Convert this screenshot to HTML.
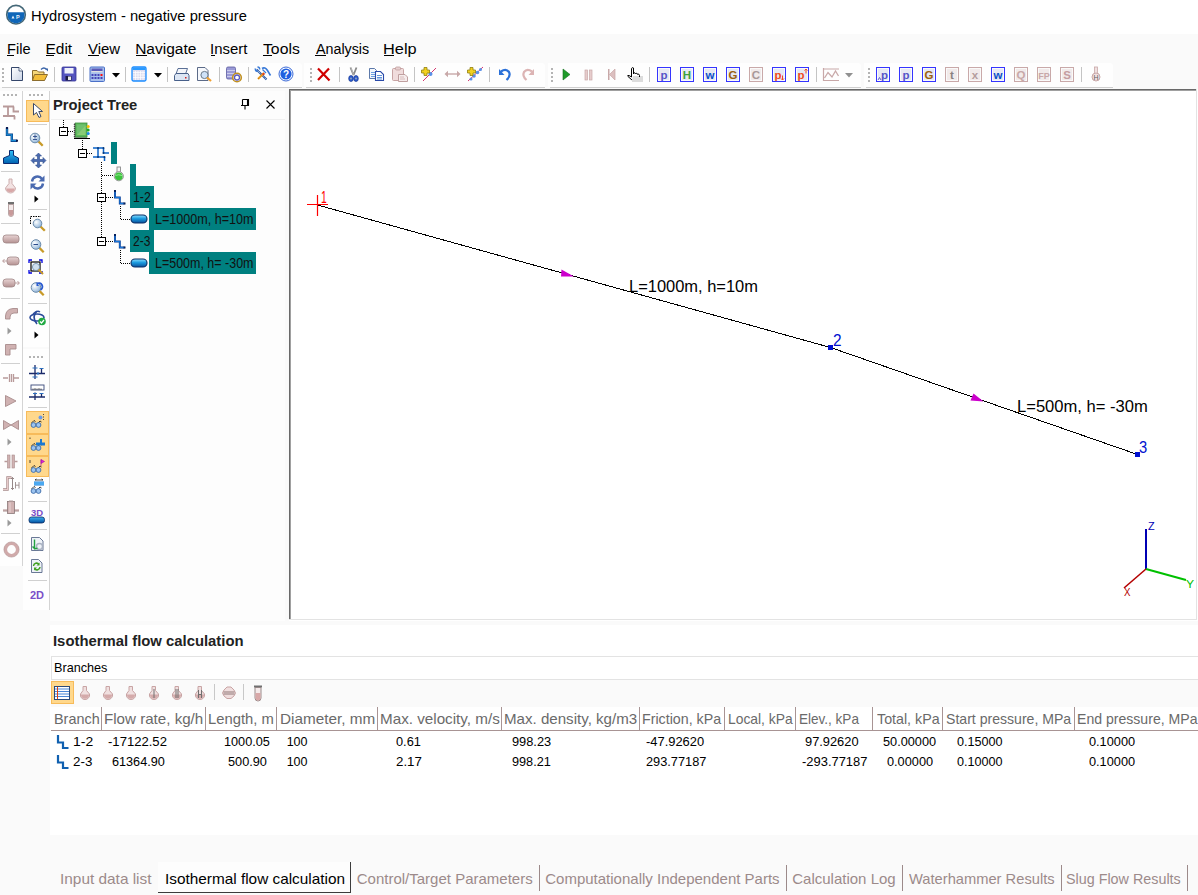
<!DOCTYPE html>
<html><head><meta charset="utf-8"><style>
html,body{margin:0;padding:0;}
body{width:1198px;height:895px;position:relative;overflow:hidden;background:#fafafa;font-family:"Liberation Sans",sans-serif;}
.t{position:absolute;white-space:nowrap;line-height:1;transform-origin:0 0;}
.r{position:absolute;}
svg.r{overflow:visible}
</style></head><body>
<div class="r" style="left:0px;top:0px;width:1198px;height:34px;background:#ffffff;"></div>
<svg class="r" style="left:5px;top:4px" width="22" height="22" viewBox="0 0 22 22">
<circle cx="11" cy="10.7" r="9.3" fill="#ffffff" stroke="#456878" stroke-width="1.6"/>
<path d="M2.85 8.3 H19.15 A8.5 8.5 0 1 1 2.85 8.3 Z" fill="#0f66b8"/>
<path d="M6.5 14.5L8 11.5L9.5 14.5Z" fill="#e8f0f8"/>
<text x="12.8" y="14.6" font-size="5.5" font-family="Liberation Sans" font-weight="bold" fill="#e8f0f8" text-anchor="middle">P</text>
</svg>
<div class="t" style="left:30.82px;top:8.00px;font-size:15.00px;color:#000;transform:scaleX(0.9809);">Hydrosystem - negative pressure</div>
<div class="t" style="left:6.53px;top:40.88px;font-size:15.50px;color:#000;transform:scaleX(0.9428);">File</div>
<div class="r" style="left:7px;top:55px;width:7px;height:1px;background:#000;"></div>
<div class="t" style="left:45.46px;top:40.88px;font-size:15.50px;color:#000;">Edit</div>
<div class="r" style="left:46px;top:55px;width:8px;height:1px;background:#000;"></div>
<div class="t" style="left:87.93px;top:40.88px;font-size:15.50px;color:#000;transform:scaleX(0.9625);">View</div>
<div class="r" style="left:88px;top:55px;width:11px;height:1px;background:#000;"></div>
<div class="t" style="left:135.16px;top:40.88px;font-size:15.50px;color:#000;">Navigate</div>
<div class="r" style="left:136px;top:55px;width:11px;height:1px;background:#000;"></div>
<div class="t" style="left:210.46px;top:40.88px;font-size:15.50px;color:#000;transform:scaleX(0.9630);">Insert</div>
<div class="r" style="left:211px;top:55px;width:4px;height:1px;background:#000;"></div>
<div class="t" style="left:263.49px;top:40.88px;font-size:15.50px;color:#000;transform:scaleX(1.0158);">Tools</div>
<div class="r" style="left:263px;top:55px;width:9px;height:1px;background:#000;"></div>
<div class="t" style="left:315.90px;top:40.88px;font-size:15.50px;color:#000;transform:scaleX(0.9214);">Analysis</div>
<div class="r" style="left:315px;top:55px;width:11px;height:1px;background:#000;"></div>
<div class="t" style="left:383.49px;top:40.88px;font-size:15.50px;color:#000;transform:scaleX(1.0536);">Help</div>
<div class="r" style="left:384px;top:55px;width:10px;height:1px;background:#000;"></div>
<div class="r" style="left:0px;top:63px;width:302px;height:24px;background:#fefefe;border-radius:0 3px 0 0"></div>
<div class="r" style="left:2px;top:87px;width:300px;height:1px;background:#cfcfcf;"></div>
<div class="r" style="left:304px;top:63px;width:241px;height:24px;background:#fefefe;border-radius:0 3px 0 0"></div>
<div class="r" style="left:306px;top:87px;width:239px;height:1px;background:#cfcfcf;"></div>
<div class="r" style="left:548px;top:63px;width:313px;height:24px;background:#fefefe;border-radius:0 3px 0 0"></div>
<div class="r" style="left:550px;top:87px;width:311px;height:1px;background:#cfcfcf;"></div>
<div class="r" style="left:864px;top:63px;width:249px;height:24px;background:#fefefe;border-radius:0 3px 0 0"></div>
<div class="r" style="left:866px;top:87px;width:247px;height:1px;background:#cfcfcf;"></div>
<div class="r" style="left:2px;top:68px;width:2px;height:2px;background:#b4b4b4"></div><div class="r" style="left:2px;top:72px;width:2px;height:2px;background:#b4b4b4"></div><div class="r" style="left:2px;top:76px;width:2px;height:2px;background:#b4b4b4"></div><div class="r" style="left:2px;top:80px;width:2px;height:2px;background:#b4b4b4"></div><svg class="r" style="left:10px;top:66px" width="14" height="16" viewBox="0 0 14 16"><defs><linearGradient id="nd" x1="0" y1="0" x2="1" y2="1"><stop offset="0" stop-color="#ffffff"/><stop offset="1" stop-color="#c9d3e6"/></linearGradient></defs><path d="M1.5 1.5H9L12.5 5V14.5H1.5Z" fill="url(#nd)" stroke="#34466a" stroke-width="1"/><path d="M9 1.5V5H12.5" fill="#fff" stroke="#34466a" stroke-width="0.8"/></svg><svg class="r" style="left:31px;top:66px" width="18" height="16" viewBox="0 0 18 16"><path d="M1.5 4.5H6L7.5 6H13V14.5H1.5Z" fill="#f5d77a" stroke="#8c6d2e" stroke-width="1"/><path d="M3.5 8.5H16.5L13.5 14.5H1.5Z" fill="#f2bd3a" stroke="#8c6d2e" stroke-width="1"/><path d="M10 3.5Q13 0.5 15.5 3.5" fill="none" stroke="#3a64a8" stroke-width="1.3"/><path d="M14 2.5H17V5.5Z" fill="#3a64a8"/></svg><div class="r" style="left:54px;top:67px;width:1px;height:15px;background:#c4c4c4"></div><svg class="r" style="left:61px;top:66px" width="16" height="16" viewBox="0 0 16 16"><rect x="1" y="1" width="14" height="14" rx="1" fill="#5454bf" stroke="#343494" stroke-width="0.8"/><rect x="3.5" y="2" width="9" height="5.5" fill="#eef0fa"/><rect x="4.5" y="10" width="6" height="4.5" fill="#1b1b40"/><rect x="7" y="10.5" width="3" height="3.5" fill="#e8e8e8"/></svg><div class="r" style="left:83px;top:67px;width:1px;height:15px;background:#c4c4c4"></div><svg class="r" style="left:89px;top:66px" width="17" height="17" viewBox="0 0 17 17"><rect x="1" y="1" width="14.5" height="14.5" rx="1" fill="#a8c0ec" stroke="#4a70c8" stroke-width="1"/><rect x="2.5" y="2.5" width="11" height="2.5" fill="#5a5ab8"/><rect x="2.5" y="5" width="11" height="1.2" fill="#e0e0e0"/><g fill="#4444b8"><rect x="2.5" y="8" width="2" height="2"/><rect x="5.5" y="8" width="2" height="2"/><rect x="8.5" y="8" width="2" height="2"/><rect x="2.5" y="11" width="2" height="2"/><rect x="5.5" y="11" width="2" height="2"/><rect x="8.5" y="11" width="2" height="2"/><rect x="11.5" y="11" width="2" height="2"/></g><rect x="11.5" y="8" width="2" height="2" fill="#ff1010"/></svg><svg class="r" style="left:112px;top:73px" width="8" height="5" viewBox="0 0 8 5"><path d="M0 0H8L4 4.5Z" fill="#000"/></svg><div class="r" style="left:125px;top:67px;width:1px;height:15px;background:#c4c4c4"></div><svg class="r" style="left:131px;top:66px" width="16" height="16" viewBox="0 0 16 16"><rect x="1" y="1" width="14" height="14" rx="1.5" fill="#dcdcf0" stroke="#1a8cff" stroke-width="1.3"/><rect x="1.5" y="1.5" width="13" height="2.5" fill="#2a9aff"/><path d="M2 6.5H14M2 9H14M2 11.5H14M4.5 5V14M7 5V14M9.5 5V14M12 5V14" stroke="#ffffff" stroke-width="0.7"/></svg><svg class="r" style="left:154px;top:73px" width="8" height="5" viewBox="0 0 8 5"><path d="M0 0H8L4 4.5Z" fill="#000"/></svg><div class="r" style="left:167px;top:67px;width:1px;height:15px;background:#c4c4c4"></div><svg class="r" style="left:173px;top:66px" width="17" height="16" viewBox="0 0 17 16"><path d="M5 2.5H14.5L12.5 8H3Z" fill="#f4f6fa" stroke="#48608a" stroke-width="0.9"/><path d="M1.5 9.5L3 7.5H15L16 9.5V14.5H1.5Z" fill="#dce6f4" stroke="#48608a" stroke-width="1"/><rect x="12" y="11" width="1.5" height="1.5" fill="#d02020"/></svg><svg class="r" style="left:196px;top:66px" width="17" height="16" viewBox="0 0 17 16"><path d="M1.5 1.5H9L12 4.5V14.5H1.5Z" fill="#f6f8fc" stroke="#4a5a7a" stroke-width="0.9"/><circle cx="8.5" cy="9" r="3.6" fill="#cfe2f8" stroke="#6a7a8a" stroke-width="1"/><path d="M11 11.5L15 15" stroke="#f0a030" stroke-width="2.2"/></svg><div class="r" style="left:219px;top:67px;width:1px;height:15px;background:#c4c4c4"></div><svg class="r" style="left:225px;top:66px" width="18" height="17" viewBox="0 0 18 17"><rect x="1.5" y="1" width="9" height="12" rx="1.5" fill="#9a9ad6" stroke="#5a5aa0" stroke-width="0.8"/><path d="M2 4.5H10M2 7.5H10M2 10.5H10" stroke="#d8d8f0" stroke-width="0.8"/><circle cx="12" cy="11.5" r="4.3" fill="#ffffff" stroke="#c09020" stroke-width="1.6"/><circle cx="12" cy="11.5" r="2.5" fill="#fff" stroke="#5a5ac0" stroke-width="1.3"/></svg><div class="r" style="left:248px;top:67px;width:1px;height:15px;background:#c4c4c4"></div><svg class="r" style="left:254px;top:66px" width="18" height="16" viewBox="0 0 18 16"><path d="M2.5 3.5L12.5 13.5" stroke="#2a5aa8" stroke-width="2"/><path d="M2.5 3.5L12.5 13.5" stroke="#ffffff" stroke-width="0.8" stroke-dasharray="1,1"/><path d="M4 13L10 7" stroke="#f0a020" stroke-width="2.2"/><path d="M4 13L10 7" stroke="#805010" stroke-width="0.6" stroke-dasharray="1,1.5"/><path d="M1.5 2.5Q1 5 3.5 5.5M3.5 1Q6 1 5.5 3.5" fill="none" stroke="#3a7ad8" stroke-width="1.6"/><path d="M8 2.5Q11 0.5 13.5 4.5L16.5 9.5" fill="none" stroke="#3a7ad8" stroke-width="1.6"/><path d="M8.5 3.5L12 7" stroke="#3a7ad8" stroke-width="1.2"/><circle cx="9.5" cy="8" r="1.2" fill="#e04020"/></svg><svg class="r" style="left:278px;top:66px" width="16" height="16" viewBox="0 0 16 16"><circle cx="8" cy="8" r="7" fill="#ffffff" stroke="#3a6ad8" stroke-width="1"/><circle cx="8" cy="8" r="5.6" fill="#1f5fe0"/><text x="8" y="11.6" font-family="Liberation Sans" font-weight="bold" font-size="10" fill="#fff" text-anchor="middle">?</text></svg><div class="r" style="left:310px;top:68px;width:2px;height:2px;background:#b4b4b4"></div><div class="r" style="left:310px;top:72px;width:2px;height:2px;background:#b4b4b4"></div><div class="r" style="left:310px;top:76px;width:2px;height:2px;background:#b4b4b4"></div><div class="r" style="left:310px;top:80px;width:2px;height:2px;background:#b4b4b4"></div><svg class="r" style="left:316px;top:67px" width="15" height="15" viewBox="0 0 15 15"><path d="M2 1.5L13.5 13.5M13 1.5L2 13" stroke="#d00000" stroke-width="2.2"/></svg><div class="r" style="left:339px;top:67px;width:1px;height:15px;background:#c4c4c4"></div><svg class="r" style="left:348px;top:66px" width="11" height="16" viewBox="0 0 11 16"><path d="M2.5 1.5L5.5 9M8.5 1.5L5.5 9" stroke="#8a8a8a" stroke-width="1.8"/><path d="M3 2L5.5 8.5" stroke="#d0d0d0" stroke-width="0.6"/><ellipse cx="3" cy="12.5" rx="2.3" ry="3" fill="#2a5ad0" stroke="#1a3a90" stroke-width="0.7"/><ellipse cx="8" cy="12.5" rx="2.3" ry="3" fill="#2a5ad0" stroke="#1a3a90" stroke-width="0.7"/><circle cx="3" cy="12.5" r="0.9" fill="#9ab"/><circle cx="8" cy="12.5" r="0.9" fill="#9ab"/></svg><svg class="r" style="left:368px;top:66px" width="17" height="16" viewBox="0 0 17 16"><path d="M1.5 2.5H6.5L8.5 4.5V12.5H1.5Z" fill="#f4f7fc" stroke="#4a6aa0" stroke-width="0.9"/><path d="M3 6.5H7M3 8.5H7M3 10.5H7" stroke="#4a88d8" stroke-width="0.8"/><path d="M7.5 5.5H12.5L15.5 8.5V14.5H7.5Z" fill="#ffffff" stroke="#2a4aa8" stroke-width="1.1"/><path d="M9 9.5H14M9 11.5H14M9 13H14" stroke="#3a78d0" stroke-width="0.8"/></svg><svg class="r" style="left:391px;top:66px" width="18" height="17" viewBox="0 0 18 17"><rect x="1.5" y="2.5" width="11" height="12" rx="1" fill="#f0dcdc" stroke="#c8a4a4" stroke-width="1"/><rect x="4.5" y="1" width="5" height="3" rx="1" fill="#e8d0d0" stroke="#c0a0a0" stroke-width="0.8"/><path d="M7.5 8.5H14L16.5 11V15.5H7.5Z" fill="#f6ecec" stroke="#c0a0a0" stroke-width="1"/><path d="M9 11H13M9 13H14" stroke="#d0b0b0" stroke-width="0.8"/></svg><div class="r" style="left:414px;top:67px;width:1px;height:15px;background:#c4c4c4"></div><svg class="r" style="left:420px;top:66px" width="18" height="16" viewBox="0 0 18 16"><path d="M3 15L16 2" stroke="#d02060" stroke-width="0.9"/><circle cx="10.5" cy="8" r="2" fill="#5a90e8"/><path d="M4 1.5H7V4H9.5V7H7V9.5H4V7H1.5V4H4Z" fill="#f2d020" stroke="#908010" stroke-width="0.8"/></svg><svg class="r" style="left:444px;top:69px" width="17" height="10" viewBox="0 0 17 10"><path d="M3 4.3H14V5.7H3Z" fill="#c8a8a8"/><path d="M0.5 5L4 1.8V8.2Z M16.5 5L13 1.8V8.2Z" fill="#c8a8a8"/></svg><svg class="r" style="left:466px;top:66px" width="18" height="16" viewBox="0 0 18 16"><path d="M2 15L17 1" stroke="#d02060" stroke-width="0.9"/><circle cx="8" cy="10" r="1.8" fill="#5a90e8"/><circle cx="11.5" cy="6.5" r="1.8" fill="#5a90e8"/><circle cx="5" cy="13" r="1.5" fill="#5a90e8"/><circle cx="14.5" cy="3.5" r="1.5" fill="#5a90e8"/><path d="M4 1.5H7V4H9.5V7H7V9.5H4V7H1.5V4H4Z" fill="#f2d020" stroke="#908010" stroke-width="0.8"/></svg><div class="r" style="left:489px;top:67px;width:1px;height:15px;background:#c4c4c4"></div><svg class="r" style="left:498px;top:67px" width="14" height="15" viewBox="0 0 14 15"><path d="M3 4.5Q8 1 11 5Q13 9 8.5 13" fill="none" stroke="#2a70d8" stroke-width="2.2"/><path d="M1 2V8H6.5Z" fill="#2a70d8"/></svg><svg class="r" style="left:521px;top:67px" width="14" height="15" viewBox="0 0 14 15"><path d="M11 4.5Q6 1 3 5Q1 9 5.5 13" fill="none" stroke="#dcb4b4" stroke-width="2.2"/><path d="M13 2V8H7.5Z" fill="#dcb4b4"/></svg><div class="r" style="left:551px;top:68px;width:2px;height:2px;background:#b4b4b4"></div><div class="r" style="left:551px;top:72px;width:2px;height:2px;background:#b4b4b4"></div><div class="r" style="left:551px;top:76px;width:2px;height:2px;background:#b4b4b4"></div><div class="r" style="left:551px;top:80px;width:2px;height:2px;background:#b4b4b4"></div><svg class="r" style="left:562px;top:68px" width="9" height="13" viewBox="0 0 9 13"><path d="M1 1V12L8 6.5Z" fill="#1f9a2a" stroke="#157020" stroke-width="0.6"/></svg><svg class="r" style="left:584px;top:68px" width="9" height="13" viewBox="0 0 9 13"><rect x="1" y="2" width="2.5" height="10" fill="#e6cccc" stroke="#c8a8a8" stroke-width="0.7"/><rect x="5.5" y="2" width="2.5" height="10" fill="#e6cccc" stroke="#c8a8a8" stroke-width="0.7"/></svg><svg class="r" style="left:607px;top:68px" width="9" height="13" viewBox="0 0 9 13"><rect x="1" y="1" width="1.5" height="11" fill="#c8a8a8"/><path d="M8 1V12L2.5 6.5Z" fill="#dcc0c0" stroke="#c8a8a8" stroke-width="0.7"/></svg><svg class="r" style="left:626px;top:66px" width="18" height="17" viewBox="0 0 18 17"><rect x="6" y="10" width="11" height="6" fill="#dcdcdc"/><path d="M6 14L2 10.5Q1 9 3 9.5L5.5 11V2.5Q6 1 7.5 2V8M7.5 7Q9 6 9.5 8M9.5 7.5Q11 6.5 11.5 8.5M11.5 8Q13 7.5 13.5 9.5V11" fill="#fff" stroke="#000" stroke-width="1"/></svg><div class="r" style="left:649px;top:67px;width:1px;height:15px;background:#c4c4c4"></div><svg class="r" style="left:657px;top:67px" width="14" height="15" viewBox="0 0 14 15"><rect x="0.5" y="0.5" width="13" height="14" fill="#e6e9f3" stroke="#3535ff" stroke-width="1"/><rect x="1.5" y="1.5" width="11" height="12" fill="none" stroke="#fafafa" stroke-width="1"/><text x="7.0" y="12" font-family="Liberation Sans" font-weight="bold" font-size="11.5" fill="#5555c8" text-anchor="middle">p</text></svg><svg class="r" style="left:680px;top:67px" width="14" height="15" viewBox="0 0 14 15"><rect x="0.5" y="0.5" width="13" height="14" fill="#e6e9f3" stroke="#3535ff" stroke-width="1"/><rect x="1.5" y="1.5" width="11" height="12" fill="none" stroke="#fafafa" stroke-width="1"/><text x="7.0" y="12" font-family="Liberation Sans" font-weight="bold" font-size="11.5" fill="#3f9f3f" text-anchor="middle">H</text></svg><svg class="r" style="left:703px;top:67px" width="14" height="15" viewBox="0 0 14 15"><rect x="0.5" y="0.5" width="13" height="14" fill="#e6e9f3" stroke="#3535ff" stroke-width="1"/><rect x="1.5" y="1.5" width="11" height="12" fill="none" stroke="#fafafa" stroke-width="1"/><text x="7.0" y="12" font-family="Liberation Sans" font-weight="bold" font-size="11.5" fill="#0a50c8" text-anchor="middle">w</text></svg><svg class="r" style="left:726px;top:67px" width="14" height="15" viewBox="0 0 14 15"><rect x="0.5" y="0.5" width="13" height="14" fill="#e6e9f3" stroke="#3535ff" stroke-width="1"/><rect x="1.5" y="1.5" width="11" height="12" fill="none" stroke="#fafafa" stroke-width="1"/><text x="7.0" y="12" font-family="Liberation Sans" font-weight="bold" font-size="11.5" fill="#9a6010" text-anchor="middle">G</text></svg><svg class="r" style="left:749px;top:67px" width="14" height="15" viewBox="0 0 14 15"><rect x="0.5" y="0.5" width="13" height="14" fill="#f1eaea" stroke="#c9a9a9" stroke-width="1"/><rect x="1.5" y="1.5" width="11" height="12" fill="none" stroke="#fafafa" stroke-width="1"/><text x="7.0" y="12" font-family="Liberation Sans" font-weight="bold" font-size="11.5" fill="#a89898" text-anchor="middle">C</text></svg><svg class="r" style="left:772px;top:67px" width="14" height="15" viewBox="0 0 14 15"><rect x="0.5" y="0.5" width="13" height="14" fill="#e6e9f3" stroke="#3535ff" stroke-width="1"/><rect x="1.5" y="1.5" width="11" height="12" fill="none" stroke="#fafafa" stroke-width="1"/><text x="6.0" y="12" font-family="Liberation Sans" font-weight="bold" font-size="11.5" fill="#f04a20" text-anchor="middle">p</text><path d="M10.5 8.5V13M9 11.5L10.5 13L12 11.5" fill="none" stroke="#f04a20" stroke-width="1"/></svg><svg class="r" style="left:795px;top:67px" width="14" height="15" viewBox="0 0 14 15"><rect x="0.5" y="0.5" width="13" height="14" fill="#e6e9f3" stroke="#3535ff" stroke-width="1"/><rect x="1.5" y="1.5" width="11" height="12" fill="none" stroke="#fafafa" stroke-width="1"/><text x="6.0" y="12" font-family="Liberation Sans" font-weight="bold" font-size="11.5" fill="#f04a20" text-anchor="middle">p</text><path d="M11 2V6.5M9.5 3.5L11 2L12.5 3.5" fill="none" stroke="#f04a20" stroke-width="1"/></svg><div class="r" style="left:816px;top:67px;width:1px;height:15px;background:#c4c4c4"></div><svg class="r" style="left:822px;top:67px" width="18" height="15" viewBox="0 0 18 15"><path d="M1.5 1V13.5H17M1 13.5H17" stroke="#c8a8a8" stroke-width="1.2" fill="none"/><path d="M1 2H17" stroke="#c8a8a8" stroke-width="1"/><path d="M2.5 11L6 5.5L10 10L13.5 4L16.5 9" fill="none" stroke="#c8a8a8" stroke-width="1.3"/></svg><svg class="r" style="left:845px;top:73px" width="8" height="5" viewBox="0 0 8 5"><path d="M0 0H8L4 4.5Z" fill="#909090"/></svg><div class="r" style="left:868px;top:68px;width:2px;height:2px;background:#b4b4b4"></div><div class="r" style="left:868px;top:72px;width:2px;height:2px;background:#b4b4b4"></div><div class="r" style="left:868px;top:76px;width:2px;height:2px;background:#b4b4b4"></div><div class="r" style="left:868px;top:80px;width:2px;height:2px;background:#b4b4b4"></div><svg class="r" style="left:876px;top:67px" width="14" height="15" viewBox="0 0 14 15"><rect x="0.5" y="0.5" width="13" height="14" fill="#e6e9f3" stroke="#3535ff" stroke-width="1"/><rect x="1.5" y="1.5" width="11" height="12" fill="none" stroke="#fafafa" stroke-width="1"/><text x="8.5" y="12" font-family="Liberation Sans" font-weight="bold" font-size="11.5" fill="#5555c8" text-anchor="middle">p</text><path d="M2 13L3.5 10.5L5 13" fill="none" stroke="#5555c8" stroke-width="0.9"/></svg><svg class="r" style="left:899px;top:67px" width="14" height="15" viewBox="0 0 14 15"><rect x="0.5" y="0.5" width="13" height="14" fill="#e6e9f3" stroke="#3535ff" stroke-width="1"/><rect x="1.5" y="1.5" width="11" height="12" fill="none" stroke="#fafafa" stroke-width="1"/><text x="7.0" y="12" font-family="Liberation Sans" font-weight="bold" font-size="11.5" fill="#5555c8" text-anchor="middle">p</text></svg><svg class="r" style="left:922px;top:67px" width="14" height="15" viewBox="0 0 14 15"><rect x="0.5" y="0.5" width="13" height="14" fill="#e6e9f3" stroke="#3535ff" stroke-width="1"/><rect x="1.5" y="1.5" width="11" height="12" fill="none" stroke="#fafafa" stroke-width="1"/><text x="7.0" y="12" font-family="Liberation Sans" font-weight="bold" font-size="11.5" fill="#9a6010" text-anchor="middle">G</text></svg><svg class="r" style="left:945px;top:67px" width="14" height="15" viewBox="0 0 14 15"><rect x="0.5" y="0.5" width="13" height="14" fill="#f1eaea" stroke="#c9a9a9" stroke-width="1"/><rect x="1.5" y="1.5" width="11" height="12" fill="none" stroke="#fafafa" stroke-width="1"/><text x="7.0" y="12" font-family="Liberation Sans" font-weight="bold" font-size="11.5" fill="#8a8080" text-anchor="middle">t</text></svg><svg class="r" style="left:968px;top:67px" width="14" height="15" viewBox="0 0 14 15"><rect x="0.5" y="0.5" width="13" height="14" fill="#f1eaea" stroke="#c9a9a9" stroke-width="1"/><rect x="1.5" y="1.5" width="11" height="12" fill="none" stroke="#fafafa" stroke-width="1"/><text x="7.0" y="12" font-family="Liberation Sans" font-weight="bold" font-size="11.5" fill="#b49c9c" text-anchor="middle">x</text></svg><svg class="r" style="left:991px;top:67px" width="14" height="15" viewBox="0 0 14 15"><rect x="0.5" y="0.5" width="13" height="14" fill="#e6e9f3" stroke="#3535ff" stroke-width="1"/><rect x="1.5" y="1.5" width="11" height="12" fill="none" stroke="#fafafa" stroke-width="1"/><text x="7.0" y="12" font-family="Liberation Sans" font-weight="bold" font-size="11.5" fill="#0a50c8" text-anchor="middle">w</text></svg><svg class="r" style="left:1014px;top:67px" width="14" height="15" viewBox="0 0 14 15"><rect x="0.5" y="0.5" width="13" height="14" fill="#f1eaea" stroke="#c9a9a9" stroke-width="1"/><rect x="1.5" y="1.5" width="11" height="12" fill="none" stroke="#fafafa" stroke-width="1"/><text x="7.0" y="12" font-family="Liberation Sans" font-weight="bold" font-size="11.5" fill="#c8a8a8" text-anchor="middle">Q</text></svg><svg class="r" style="left:1037px;top:67px" width="14" height="15" viewBox="0 0 14 15"><rect x="0.5" y="0.5" width="13" height="14" fill="#f1eaea" stroke="#c9a9a9" stroke-width="1"/><rect x="1.5" y="1.5" width="11" height="12" fill="none" stroke="#fafafa" stroke-width="1"/><text x="7.0" y="12" font-family="Liberation Sans" font-weight="bold" font-size="9" fill="#c8a8a8" text-anchor="middle">FP</text></svg><svg class="r" style="left:1060px;top:67px" width="14" height="15" viewBox="0 0 14 15"><rect x="0.5" y="0.5" width="13" height="14" fill="#f1eaea" stroke="#c9a9a9" stroke-width="1"/><rect x="1.5" y="1.5" width="11" height="12" fill="none" stroke="#fafafa" stroke-width="1"/><text x="7.0" y="12" font-family="Liberation Sans" font-weight="bold" font-size="11.5" fill="#c49ca0" text-anchor="middle">S</text></svg><div class="r" style="left:1081px;top:67px;width:1px;height:15px;background:#c4c4c4"></div><svg class="r" style="left:1090px;top:66px" width="12" height="16" viewBox="0 0 12 16"><rect x="4.5" y="1" width="3" height="8" fill="#f0e0e0" stroke="#c8a8a8" stroke-width="0.8"/><circle cx="6" cy="11" r="4" fill="#f0e0e0" stroke="#c8a8a8" stroke-width="1"/><text x="6" y="13.5" font-family="Liberation Sans" font-size="7" fill="#606060" text-anchor="middle">H</text></svg>
<div class="r" style="left:0px;top:91px;width:22px;height:475px;background:#fefefe;"></div>
<div class="r" style="left:22px;top:91px;width:1px;height:475px;background:#d4d4d4;"></div>
<div class="r" style="left:23px;top:91px;width:26px;height:256px;background:#fefefe;"></div>
<div class="r" style="left:23px;top:349px;width:26px;height:261px;background:#fefefe;"></div>
<div class="r" style="left:49px;top:91px;width:1px;height:519px;background:#d4d4d4;"></div>
<div class="r" style="left:3px;top:94px;width:2px;height:2px;background:#b4b4b4"></div><div class="r" style="left:7px;top:94px;width:2px;height:2px;background:#b4b4b4"></div><div class="r" style="left:11px;top:94px;width:2px;height:2px;background:#b4b4b4"></div><div class="r" style="left:15px;top:94px;width:2px;height:2px;background:#b4b4b4"></div><svg class="r" style="left:2px;top:104px" width="18" height="16" viewBox="0 0 18 16"><path d="M1 2.5H12M6 2.5V12M11.5 2.5V7.5H17M1 12H13M12.5 12V15.5" fill="none" stroke="#b89a9a" stroke-width="1.8"/></svg><svg class="r" style="left:5px;top:126px" width="14" height="17" viewBox="0 0 14 17"><path d="M2 1.5V8.8H6.8V14.7H12" fill="none" stroke="#0a3a80" stroke-width="2.4"/><path d="M2 2.5V8.8H6.8V14.7H11" fill="none" stroke="#1a90d8" stroke-width="1.2"/><rect x="1" y="1" width="2" height="2" fill="#0a1a50"/><rect x="11" y="13.7" width="2" height="2" fill="#0a1a50"/></svg><svg class="r" style="left:1px;top:149px" width="20" height="16" viewBox="0 0 20 16"><defs><linearGradient id="tee" x1="0" y1="0" x2="0" y2="1"><stop offset="0" stop-color="#30c0f8"/><stop offset="1" stop-color="#0060b0"/></linearGradient></defs><path d="M8.5 1.5H12.5V6.5L17.5 9V14.5H2.5V9L8.5 6.5Z" fill="url(#tee)" stroke="#0a2a70" stroke-width="1"/></svg><div class="r" style="left:1px;top:171px;width:19px;height:1px;background:#d0d0d0"></div><svg class="r" style="left:4px;top:178px" width="13" height="16" viewBox="0 0 13 16"><path d="M5 1H8V5.5L11.5 10A5 5 0 0 1 6.5 15A5 5 0 0 1 1.5 10L5 5.5Z" fill="#f2e2e2" stroke="#c8a8a8" stroke-width="0.9"/><path d="M2.2 10.5H10.8A4.3 4.3 0 0 1 6.5 14.3A4.3 4.3 0 0 1 2.2 10.5Z" fill="#d8a8a8"/></svg><svg class="r" style="left:6px;top:201px" width="10" height="16" viewBox="0 0 10 16"><rect x="2" y="1" width="6" height="2.5" fill="#707070"/><path d="M2.5 3.5H7.5V13A2.5 2.5 0 0 1 2.5 13Z" fill="#f4eaea" stroke="#a89090" stroke-width="0.8"/><path d="M3 9H7V13A2 2 0 0 1 3 13Z" fill="#c89a9a"/></svg><div class="r" style="left:1px;top:223px;width:19px;height:1px;background:#d0d0d0"></div><svg class="r" style="left:2px;top:234px" width="18" height="10" viewBox="0 0 18 10"><defs><linearGradient id="pp1" x1="0" y1="0" x2="0" y2="1"><stop offset="0" stop-color="#e8d4d4"/><stop offset="1" stop-color="#b49292"/></linearGradient></defs><rect x="1" y="1" width="16" height="8" rx="3" fill="url(#pp1)" stroke="#a08686" stroke-width="0.8"/></svg><svg class="r" style="left:2px;top:256px" width="18" height="10" viewBox="0 0 18 10"><defs><linearGradient id="pp2" x1="0" y1="0" x2="0" y2="1"><stop offset="0" stop-color="#e8d4d4"/><stop offset="1" stop-color="#b49292"/></linearGradient></defs><rect x="5" y="1" width="12" height="8" rx="3" fill="url(#pp2)" stroke="#a08686" stroke-width="0.8"/><path d="M0.5 5H5M2.5 3L0.8 5L2.5 7" fill="none" stroke="#b89a9a" stroke-width="0.9"/></svg><svg class="r" style="left:2px;top:278px" width="18" height="10" viewBox="0 0 18 10"><defs><linearGradient id="pp3" x1="0" y1="0" x2="0" y2="1"><stop offset="0" stop-color="#e8d4d4"/><stop offset="1" stop-color="#b49292"/></linearGradient></defs><rect x="1" y="1" width="12" height="8" rx="3" fill="url(#pp3)" stroke="#a08686" stroke-width="0.8"/><path d="M13 5H17.5M15.5 3L17.2 5L15.5 7" fill="none" stroke="#b89a9a" stroke-width="0.9"/></svg><div class="r" style="left:1px;top:298px;width:19px;height:1px;background:#d0d0d0"></div><svg class="r" style="left:4px;top:307px" width="15" height="13" viewBox="0 0 15 13"><path d="M1.5 12V9Q2 2 9 1.5H13.5V6H10Q6 6 6 10V12Z" fill="#d0b2b2" stroke="#a88c8c" stroke-width="0.9"/></svg><svg class="r" style="left:7px;top:327px" width="5" height="8" viewBox="0 0 5 8"><path d="M0.5 0.5V7.5L4.5 4Z" fill="#9a9a9a"/></svg><svg class="r" style="left:4px;top:343px" width="13" height="13" viewBox="0 0 13 13"><path d="M1.5 12V1.5H12V6H6V12Z" fill="#d0b2b2" stroke="#a88c8c" stroke-width="0.9"/></svg><div class="r" style="left:1px;top:363px;width:19px;height:1px;background:#d0d0d0"></div><svg class="r" style="left:2px;top:372px" width="18" height="12" viewBox="0 0 18 12"><path d="M1 6H6M12 6H17M7.5 2V10M9.5 2V10M11.5 2V10" stroke="#b89a9a" stroke-width="1.3"/></svg><svg class="r" style="left:4px;top:394px" width="13" height="14" viewBox="0 0 13 14"><path d="M1.5 1.5L12 7L1.5 12.5Z" fill="#d0b2b2" stroke="#a88c8c" stroke-width="0.9"/></svg><svg class="r" style="left:2px;top:419px" width="18" height="12" viewBox="0 0 18 12"><path d="M1.5 1.5L9 6L16.5 1.5V10.5L9 6L1.5 10.5Z" fill="#d0b2b2" stroke="#a88c8c" stroke-width="0.9"/></svg><svg class="r" style="left:7px;top:438px" width="5" height="8" viewBox="0 0 5 8"><path d="M0.5 0.5V7.5L4.5 4Z" fill="#9a9a9a"/></svg><svg class="r" style="left:4px;top:454px" width="14" height="15" viewBox="0 0 14 15"><rect x="3.5" y="1" width="2.5" height="13" fill="#d0b2b2" stroke="#a88c8c" stroke-width="0.6"/><rect x="8" y="1" width="2.5" height="13" fill="#d0b2b2" stroke="#a88c8c" stroke-width="0.6"/><path d="M0.5 7.5H3.5M10.5 7.5H13.5" stroke="#b89a9a" stroke-width="1.3"/></svg><svg class="r" style="left:2px;top:475px" width="19" height="17" viewBox="0 0 19 17"><path d="M1 14.5H5.5V2.5H9.5" fill="none" stroke="#a88a8a" stroke-width="2.4"/><path d="M1 14.5H5.5V2.5H9.5" fill="none" stroke="#e6caca" stroke-width="1.1"/><path d="M10.5 2.5V14.5M9 4L10.5 2.5L12 4M9 13L10.5 14.5L12 13" fill="none" stroke="#8a7a7a" stroke-width="0.9"/><path d="M13.5 7V13.5M17 7V13.5M13.5 10.2H17" stroke="#9a8a8a" stroke-width="0.9"/></svg><svg class="r" style="left:2px;top:500px" width="18" height="15" viewBox="0 0 18 15"><path d="M1 10.5H17" stroke="#a88c8c" stroke-width="2"/><path d="M1 10H17" stroke="#e0c4c4" stroke-width="0.8"/><rect x="5.5" y="1.5" width="7" height="12" fill="#d0b2b2" stroke="#8a7878" stroke-width="0.8"/><rect x="7" y="0.5" width="4" height="1.5" fill="#b09a9a"/><path d="M8 2.5V12.5" stroke="#ead6d6" stroke-width="1"/></svg><svg class="r" style="left:7px;top:519px" width="5" height="8" viewBox="0 0 5 8"><path d="M0.5 0.5V7.5L4.5 4Z" fill="#9a9a9a"/></svg><div class="r" style="left:1px;top:533px;width:19px;height:1px;background:#d0d0d0"></div><svg class="r" style="left:3px;top:541px" width="17" height="17" viewBox="0 0 17 17"><circle cx="8.5" cy="8.5" r="6" fill="none" stroke="#d0aaaa" stroke-width="3.2"/><circle cx="8.5" cy="8.5" r="7.6" fill="none" stroke="#b09090" stroke-width="0.6"/></svg><div class="r" style="left:29px;top:94px;width:2px;height:2px;background:#b4b4b4"></div><div class="r" style="left:33px;top:94px;width:2px;height:2px;background:#b4b4b4"></div><div class="r" style="left:37px;top:94px;width:2px;height:2px;background:#b4b4b4"></div><div class="r" style="left:41px;top:94px;width:2px;height:2px;background:#b4b4b4"></div><div class="r" style="left:26px;top:100px;width:23px;height:22px;background:#ffd88c;box-sizing:border-box;border:1px solid #f7bb5a"></div><svg class="r" style="left:32px;top:102px" width="12" height="17" viewBox="0 0 12 17"><path d="M1.5 1.5V13L4.5 10.5L7 15.5L9 14.5L6.8 9.5H10.5Z" fill="#fff" stroke="#3a4a6a" stroke-width="1"/></svg><div class="r" style="left:28px;top:124px;width:19px;height:1px;background:#d0d0d0"></div><svg class="r" style="left:28px;top:130px" width="18" height="18" viewBox="0 0 18 18"><path d="M10.4 11.4L14.7 15.7" stroke="#c89a28" stroke-width="2.3"/><defs><radialGradient id="mg130" cx="0.35" cy="0.35" r="0.7"><stop offset="0" stop-color="#ffffff"/><stop offset="1" stop-color="#8fb4d8"/></radialGradient></defs><circle cx="7.0" cy="8.0" r="4.8" fill="url(#mg130)" stroke="#6a8aaa" stroke-width="1"/><path d="M5 6.5H9M7 4.5V8.5M5 9.5H9" stroke="#2a4a8a" stroke-width="0.9"/></svg><svg class="r" style="left:30px;top:152px" width="17" height="17" viewBox="0 0 17 17"><path d="M8.5 1L5.5 4H7.5V7.5H4V5.5L1 8.5L4 11.5V9.5H7.5V13H5.5L8.5 16L11.5 13H9.5V9.5H13V11.5L16 8.5L13 5.5V7.5H9.5V4H11.5Z" fill="#4a6ab0" stroke="#2a4a8a" stroke-width="0.6"/></svg><svg class="r" style="left:29px;top:174px" width="17" height="17" viewBox="0 0 17 17"><path d="M3 7.5A5.5 5.5 0 0 1 13 5" fill="none" stroke="#4a6ab0" stroke-width="2.4"/><path d="M15.5 1.5V7.5H9.5Z" fill="#4a6ab0"/><path d="M14 9.5A5.5 5.5 0 0 1 4 12" fill="none" stroke="#4a6ab0" stroke-width="2.4"/><path d="M1.5 15.5V9.5H7.5Z" fill="#4a6ab0"/></svg><svg class="r" style="left:34px;top:195px" width="5" height="8" viewBox="0 0 5 8"><path d="M0.5 0.5V7.5L4.5 4Z" fill="#000"/></svg><div class="r" style="left:28px;top:209px;width:19px;height:1px;background:#d0d0d0"></div><svg class="r" style="left:28px;top:214px" width="18" height="18" viewBox="0 0 18 18"><path d="M2.5 10V2.5H13" fill="none" stroke="#000" stroke-width="1" stroke-dasharray="1.5,1"/><path d="M12.5 12.5L16.8 16.8" stroke="#c89a28" stroke-width="2.3"/><defs><radialGradient id="mg214" cx="0.35" cy="0.35" r="0.7"><stop offset="0" stop-color="#ffffff"/><stop offset="1" stop-color="#8fb4d8"/></radialGradient></defs><circle cx="9.5" cy="9.5" r="4.3" fill="url(#mg214)" stroke="#6a8aaa" stroke-width="1"/></svg><svg class="r" style="left:28px;top:237px" width="18" height="18" viewBox="0 0 18 18"><path d="M11.4 10.9L15.7 15.2" stroke="#c89a28" stroke-width="2.3"/><defs><radialGradient id="mg237" cx="0.35" cy="0.35" r="0.7"><stop offset="0" stop-color="#ffffff"/><stop offset="1" stop-color="#8fb4d8"/></radialGradient></defs><circle cx="8.0" cy="7.5" r="4.8" fill="url(#mg237)" stroke="#6a8aaa" stroke-width="1"/><path d="M5.5 7.5H10" stroke="#2a4a8a" stroke-width="1"/></svg><svg class="r" style="left:28px;top:259px" width="18" height="17" viewBox="0 0 18 17"><path d="M1 4V1H4M11 1H14V4M14 12V14H11M4 14H1V11" fill="none" stroke="#0000e0" stroke-width="1.3"/><rect x="3" y="3" width="9" height="9" fill="none" stroke="#000" stroke-width="1.2"/><circle cx="8" cy="8" r="3.6" fill="#cfe0f0" stroke="#6a8aaa" stroke-width="0.8"/><path d="M10.5 10.5L15 15" stroke="#c89a28" stroke-width="2"/></svg><svg class="r" style="left:28px;top:281px" width="18" height="18" viewBox="0 0 18 18"><path d="M11.4 9.9L15.7 14.2" stroke="#c89a28" stroke-width="2.3"/><defs><radialGradient id="mg281" cx="0.35" cy="0.35" r="0.7"><stop offset="0" stop-color="#ffffff"/><stop offset="1" stop-color="#8fb4d8"/></radialGradient></defs><circle cx="8.0" cy="6.5" r="4.8" fill="url(#mg281)" stroke="#6a8aaa" stroke-width="1"/><path d="M9 2.5A3.6 3.6 0 1 1 12.5 9" fill="none" stroke="#2a5ad0" stroke-width="1.8"/><path d="M8.5 1V5H11Z" fill="#2a5ad0"/></svg><div class="r" style="left:28px;top:303px;width:19px;height:1px;background:#d0d0d0"></div><svg class="r" style="left:28px;top:309px" width="19" height="17" viewBox="0 0 19 17"><ellipse cx="9" cy="8.5" rx="7" ry="3.5" fill="none" stroke="#2a4a9a" stroke-width="1.6"/><path d="M9 2Q3 8 9 15" fill="none" stroke="#2a4a9a" stroke-width="1.6"/><path d="M5 5Q9 1 12 3" fill="none" stroke="#2a4a9a" stroke-width="1.4"/><circle cx="14" cy="12.5" r="3.8" fill="#22aa44"/><path d="M12 12.5L13.5 14L16 11" fill="none" stroke="#fff" stroke-width="1.2"/></svg><svg class="r" style="left:34px;top:331px" width="5" height="8" viewBox="0 0 5 8"><path d="M0.5 0.5V7.5L4.5 4Z" fill="#000"/></svg><div class="r" style="left:29px;top:356px;width:2px;height:2px;background:#b4b4b4"></div><div class="r" style="left:33px;top:356px;width:2px;height:2px;background:#b4b4b4"></div><div class="r" style="left:37px;top:356px;width:2px;height:2px;background:#b4b4b4"></div><div class="r" style="left:41px;top:356px;width:2px;height:2px;background:#b4b4b4"></div><svg class="r" style="left:28px;top:363px" width="18" height="17" viewBox="0 0 18 17"><path d="M1 10.5H17M7 2V16M13.5 5V10.5M10 10.5V10.5" fill="none" stroke="#1a2a6a" stroke-width="1.3"/><path d="M4.5 5H9.5M4.5 14H9.5M11.5 5.5H15.5" stroke="#2a70c0" stroke-width="1.2"/><rect x="9" y="9.5" width="2" height="2" fill="#2a70c0"/></svg><svg class="r" style="left:28px;top:384px" width="18" height="17" viewBox="0 0 18 17"><rect x="3" y="1" width="13" height="5" fill="#fff" stroke="#3a4a7a" stroke-width="0.9"/><path d="M5 6V4.5M7 6V4M9 6V4.5M11 6V4M13 6V4.5" stroke="#000" stroke-width="0.6"/><path d="M1 13H17M7 8.5V16M13.5 9.5V13" fill="none" stroke="#1a2a6a" stroke-width="1.3"/><path d="M5 9.5H9M11.5 9.5H15.5" stroke="#2a70c0" stroke-width="1.1"/></svg><div class="r" style="left:28px;top:407px;width:19px;height:1px;background:#d0d0d0"></div><div class="r" style="left:26px;top:411px;width:23px;height:23px;background:#ffd88c;box-sizing:border-box;border:1px solid #f7bb5a"></div><div class="r" style="left:26px;top:434px;width:23px;height:22px;background:#ffd88c;box-sizing:border-box;border:1px solid #f7bb5a"></div><div class="r" style="left:26px;top:456px;width:23px;height:21px;background:#ffd88c;box-sizing:border-box;border:1px solid #f7bb5a"></div><svg class="r" style="left:28px;top:413px" width="18" height="16" viewBox="0 0 18 16"><path d="M3.5 10L6 7.5L7.5 8.5M9 11L12 8L13.5 9" stroke="#222" stroke-width="0.9" fill="none"/><circle cx="5.5" cy="12" r="2.4" fill="#9cc4f0" stroke="#3a6aa8" stroke-width="0.9"/><circle cx="10.5" cy="12" r="2.4" fill="#9cc4f0" stroke="#3a6aa8" stroke-width="0.9"/><circle cx="12.5" cy="4.5" r="2" fill="#6a9ae8"/><path d="M15.5 1V2M15.5 3.5V4.5M15.5 6V7" stroke="#222" stroke-width="0.8"/></svg><svg class="r" style="left:28px;top:436px" width="18" height="16" viewBox="0 0 18 16"><path d="M3.5 10L6 7.5L7.5 8.5M9 11L12 8L13.5 9" stroke="#222" stroke-width="0.9" fill="none"/><circle cx="5.5" cy="12" r="2.4" fill="#9cc4f0" stroke="#3a6aa8" stroke-width="0.9"/><circle cx="10.5" cy="12" r="2.4" fill="#9cc4f0" stroke="#3a6aa8" stroke-width="0.9"/><path d="M8 6.5H12V3H14V6.5H17V9.5H8Z" fill="#1a78d0"/><path d="M2 1.5V3" stroke="#222" stroke-width="0.8"/></svg><svg class="r" style="left:28px;top:458px" width="18" height="16" viewBox="0 0 18 16"><path d="M3.5 10L6 7.5L7.5 8.5M9 11L12 8L13.5 9" stroke="#222" stroke-width="0.9" fill="none"/><circle cx="5.5" cy="12" r="2.4" fill="#9cc4f0" stroke="#3a6aa8" stroke-width="0.9"/><circle cx="10.5" cy="12" r="2.4" fill="#9cc4f0" stroke="#3a6aa8" stroke-width="0.9"/><path d="M13 1.5V8M13 1.5L16.5 3.5L13 5.5Z" fill="#e020e0" stroke="#a010a0" stroke-width="0.6"/><path d="M2 2V5" stroke="#222" stroke-width="0.8"/></svg><svg class="r" style="left:28px;top:479px" width="18" height="16" viewBox="0 0 18 16"><path d="M3.5 10L6 7.5L7.5 8.5M9 11L12 8L13.5 9" stroke="#222" stroke-width="0.9" fill="none"/><circle cx="5.5" cy="12" r="2.4" fill="#9cc4f0" stroke="#3a6aa8" stroke-width="0.9"/><circle cx="10.5" cy="12" r="2.4" fill="#9cc4f0" stroke="#3a6aa8" stroke-width="0.9"/><path d="M6 3H16M6 6H16" stroke="#1a78d0" stroke-width="1"/><rect x="6" y="3" width="10" height="3" fill="#4aa8f0"/><path d="M7 1H15M7 1L8.5 0M15 1L13.5 0" stroke="#000" stroke-width="0.7"/></svg><div class="r" style="left:28px;top:501px;width:19px;height:1px;background:#d0d0d0"></div><svg class="r" style="left:28px;top:507px" width="18" height="17" viewBox="0 0 18 17"><text x="9" y="8.5" font-family="Liberation Sans" font-weight="bold" font-size="9.5" fill="#7a4ec8" text-anchor="middle">3D</text><defs><linearGradient id="p3d" x1="0" y1="0" x2="0" y2="1"><stop offset="0" stop-color="#40b0f0"/><stop offset="1" stop-color="#0050a0"/></linearGradient></defs><rect x="1" y="10" width="15.5" height="6" rx="2.5" fill="url(#p3d)" stroke="#0a2a60" stroke-width="0.8"/></svg><div class="r" style="left:28px;top:529px;width:19px;height:1px;background:#d0d0d0"></div><svg class="r" style="left:30px;top:536px" width="15" height="16" viewBox="0 0 15 16"><path d="M1.5 1.5H9.5L13 5V14.5H1.5Z" fill="#eef2f8" stroke="#5a6a8a" stroke-width="0.9"/><circle cx="9.5" cy="10.5" r="3" fill="none" stroke="#a8b0c0" stroke-width="1.4"/><path d="M4.5 3.5V12.5L2.5 10.5M4.5 12.5L7.5 12.5" fill="none" stroke="#20a040" stroke-width="1.4"/></svg><svg class="r" style="left:30px;top:558px" width="14" height="16" viewBox="0 0 14 16"><path d="M1.5 1.5H8.5L12 5V14.5H1.5Z" fill="#eef2f8" stroke="#5a6a8a" stroke-width="0.9"/><path d="M3.5 8A3 3 0 0 1 9 6.5M10 9A3 3 0 0 1 4.5 10.5" fill="none" stroke="#40a020" stroke-width="1.5"/><path d="M9.5 4.5V7.5H6.5Z M4 12.5V9.5H7Z" fill="#40a020"/></svg><div class="r" style="left:28px;top:580px;width:19px;height:1px;background:#d0d0d0"></div><svg class="r" style="left:28px;top:587px" width="18" height="14" viewBox="0 0 18 14"><text x="9" y="11.5" font-family="Liberation Sans" font-weight="bold" font-size="11" fill="#7a4ec8" text-anchor="middle">2D</text></svg>
<div class="r" style="left:50px;top:91px;width:235px;height:530px;background:#fdfdfd;"></div>
<div class="t" style="left:52.84px;top:97.30px;font-size:15.00px;color:#222;font-weight:bold;transform:scaleX(0.9813);">Project Tree</div>
<div class="r" style="left:51px;top:119px;width:234px;height:1px;background:#f0f0f0;"></div>
<div class="r" style="left:111px;top:142px;width:6px;height:22px;background:#008080;"></div>
<div class="r" style="left:130px;top:164px;width:6px;height:22px;background:#008080;"></div>
<div class="r" style="left:130px;top:186px;width:24px;height:22px;background:#008080;"></div>
<div class="r" style="left:149px;top:208px;width:107px;height:22px;background:#008080;"></div>
<div class="r" style="left:130px;top:230px;width:24px;height:22px;background:#008080;"></div>
<div class="r" style="left:149px;top:252px;width:107px;height:22px;background:#008080;"></div>
<div class="t" style="left:132.97px;top:189.89px;font-size:14.30px;color:#111;transform:scaleX(0.8635);">1-2</div>
<div class="t" style="left:133.30px;top:233.79px;font-size:14.30px;color:#111;transform:scaleX(0.8412);">2-3</div>
<div class="t" style="left:154.59px;top:211.72px;font-size:14.50px;color:#111;transform:scaleX(0.8667);">L=1000m, h=10m</div>
<div class="t" style="left:154.60px;top:255.52px;font-size:14.50px;color:#111;transform:scaleX(0.8605);">L=500m, h= -30m</div>
<svg class="r" style="left:0;top:0" width="300" height="300" viewBox="0 0 300 300" shape-rendering="crispEdges"><path d="M63.5 120V127M68 131.5H74M82.5 140V149M87 153.5H93M101.5 162V238M102 175.5H113M106 197.5H113M120.5 206V219M121 219.5H131M106 241.5H113M120.5 250V263M121 263.5H131" fill="none" stroke="#000" stroke-width="1" stroke-dasharray="1,1"/><rect x="59.5" y="127.5" width="8" height="8" fill="#fff" stroke="#000" stroke-width="1"/><path d="M61 131.5H66" stroke="#000" stroke-width="1.3"/><rect x="78.5" y="149.5" width="8" height="8" fill="#fff" stroke="#000" stroke-width="1"/><path d="M80 153.5H85" stroke="#000" stroke-width="1.3"/><rect x="97.5" y="193.5" width="8" height="8" fill="#fff" stroke="#000" stroke-width="1"/><path d="M99 197.5H104" stroke="#000" stroke-width="1.3"/><rect x="97.5" y="237.5" width="8" height="8" fill="#fff" stroke="#000" stroke-width="1"/><path d="M99 241.5H104" stroke="#000" stroke-width="1.3"/></svg>
<svg class="r" style="left:73px;top:122px" width="18" height="18" viewBox="0 0 18 18"><rect x="1" y="1" width="13" height="15" fill="#9a9a9a"/><rect x="2.5" y="1" width="11.5" height="14" fill="#5cb85c" stroke="#3f8f3f" stroke-width="0.8"/><path d="M4 13L12.5 3.5V13Z" fill="#8fcf6a"/><rect x="4" y="2.5" width="8.5" height="10" fill="#7fc77f" opacity="0.5"/><circle cx="15.2" cy="4.5" r="1.5" fill="#f2c200"/><circle cx="15.2" cy="8" r="1.5" fill="#22aa22"/><circle cx="15.2" cy="11.5" r="1.5" fill="#1a8ae6"/><path d="M1 16.5H17" stroke="#000" stroke-width="1"/><path d="M1.5 2V16" stroke="#444" stroke-width="1.4" stroke-dasharray="1,1"/></svg>
<svg class="r" style="left:92px;top:146px" width="18" height="16" viewBox="0 0 18 16"><path d="M1 2H12M6 2V11M11.5 2V7H17M1 11H13M12.5 11V15" fill="none" stroke="#0a62c8" stroke-width="1.5"/><g fill="#06306a"><rect x="5.2" y="1.2" width="1.6" height="1.6"/><rect x="10.7" y="1.2" width="1.6" height="1.6"/><rect x="5.2" y="10.2" width="1.6" height="1.6"/><rect x="10.7" y="6.2" width="1.6" height="1.6"/><rect x="11.7" y="10.2" width="1.6" height="1.6"/></g></svg>
<svg class="r" style="left:113px;top:166px" width="12" height="16" viewBox="0 0 12 16"><rect x="4" y="1" width="3.5" height="5.5" fill="#f4f4f4" stroke="#8a8a8a" stroke-width="0.9"/><circle cx="5.8" cy="10.2" r="4.6" fill="#e8e8e8" stroke="#8a8a8a" stroke-width="0.9"/><circle cx="5.8" cy="10.4" r="3.8" fill="#3cc43c"/><path d="M2.5 9.5Q5.5 8 9 9.5" stroke="#a8f0a8" stroke-width="0.8" fill="none"/></svg>
<svg class="r" style="left:113px;top:189px" width="13" height="16" viewBox="0 0 13 16"><path d="M2 1.5V8.5H6.8V14.5H11.5" fill="none" stroke="#0a3a90" stroke-width="1.9"/><path d="M2 2.5V8.5H6.8V14.5H11" fill="none" stroke="#1a7ee0" stroke-width="0.9"/><rect x="1" y="1" width="2" height="2" fill="#06205a"/><rect x="10.5" y="13.5" width="2" height="2" fill="#06205a"/></svg>
<svg class="r" style="left:113px;top:233px" width="13" height="16" viewBox="0 0 13 16"><path d="M2 1.5V8.5H6.8V14.5H11.5" fill="none" stroke="#0a3a90" stroke-width="1.9"/><path d="M2 2.5V8.5H6.8V14.5H11" fill="none" stroke="#1a7ee0" stroke-width="0.9"/><rect x="1" y="1" width="2" height="2" fill="#06205a"/><rect x="10.5" y="13.5" width="2" height="2" fill="#06205a"/></svg>
<svg class="r" style="left:130px;top:214px" width="18" height="10" viewBox="0 0 18 10"><defs><linearGradient id="pg214" x1="0" y1="0" x2="0" y2="1"><stop offset="0" stop-color="#8fe0ff"/><stop offset="0.45" stop-color="#1a9be0"/><stop offset="1" stop-color="#0a4f9a"/></linearGradient></defs><rect x="1" y="1" width="16" height="8" rx="4" fill="url(#pg214)" stroke="#0a2e66" stroke-width="1.1"/></svg>
<svg class="r" style="left:130px;top:258px" width="18" height="10" viewBox="0 0 18 10"><defs><linearGradient id="pg258" x1="0" y1="0" x2="0" y2="1"><stop offset="0" stop-color="#8fe0ff"/><stop offset="0.45" stop-color="#1a9be0"/><stop offset="1" stop-color="#0a4f9a"/></linearGradient></defs><rect x="1" y="1" width="16" height="8" rx="4" fill="url(#pg258)" stroke="#0a2e66" stroke-width="1.1"/></svg>
<svg class="r" style="left:238px;top:98px" width="40" height="14" viewBox="0 0 40 14"><path d="M4.5 1.5H10.5V7.5H3.5M4.5 1.5V7.5M9.5 1.5V7.5M7 7.5V11.5M3 7.5H11" fill="none" stroke="#000" stroke-width="1.1"/><path d="M28.5 2.5L36.5 10.5M36.5 2.5L28.5 10.5" stroke="#000" stroke-width="1.1"/></svg>
<div class="r" style="left:289px;top:89px;width:909px;height:532px;background:#ffffff;"></div>
<div class="r" style="left:289px;top:89px;width:908px;height:1px;background:#696969;"></div>
<div class="r" style="left:289px;top:89px;width:1px;height:531px;background:#696969;"></div>
<div class="r" style="left:290px;top:90px;width:906px;height:1px;background:#a0a0a0;"></div>
<div class="r" style="left:290px;top:90px;width:1px;height:529px;background:#a0a0a0;"></div>
<div class="r" style="left:289px;top:619px;width:908px;height:1px;background:#e3e3e3;"></div>
<div class="r" style="left:1196px;top:89px;width:1px;height:531px;background:#e3e3e3;"></div>
<svg class="r" style="left:0;top:0" width="1198" height="895" viewBox="0 0 1198 895"><polyline points="317.5,205 830.5,347.5 1137.5,454.5" fill="none" stroke="#000" stroke-width="1" shape-rendering="crispEdges"/><path d="M307 204.5H328M317.5 195V216" stroke="#ff0000" stroke-width="1.2"/><rect x="828" y="345" width="5" height="5" fill="#0010d0"/><rect x="1135" y="452" width="5" height="5" fill="#0010d0"/><polygon points="561.5,269.5 561,276.5 574,276.5" fill="#cc00cc"/><polygon points="973.5,393.5 970.5,400.5 983.5,401.5" fill="#cc00cc"/><line x1="1146" y1="569" x2="1146" y2="529" stroke="#0000b4" stroke-width="2"/><line x1="1146" y1="569" x2="1186" y2="580" stroke="#00c000" stroke-width="2"/><line x1="1146" y1="569" x2="1124" y2="588" stroke="#b40000" stroke-width="1.6"/></svg>
<div class="t" style="left:321.22px;top:190.45px;font-size:16.00px;color:#ff0000;transform:scaleX(0.6466);">1</div>
<div class="t" style="left:833.23px;top:333.45px;font-size:16.00px;color:#0010d0;transform:scaleX(0.9615);">2</div>
<div class="t" style="left:1139.41px;top:440.45px;font-size:16.00px;color:#0010d0;transform:scaleX(0.9211);">3</div>
<div class="t" style="left:629.28px;top:279.35px;font-size:16.00px;color:#000;transform:scaleX(1.0275);">L=1000m, h=10m</div>
<div class="t" style="left:1017.48px;top:399.35px;font-size:16.00px;color:#000;transform:scaleX(1.0347);">L=500m, h= -30m</div>
<div class="t" style="left:1147.67px;top:520.69px;font-size:11.00px;color:#0000b4;transform:scaleX(0.9917);">Z</div>
<div class="t" style="left:1186.20px;top:579.19px;font-size:11.00px;color:#00c000;transform:scaleX(1.0997);">Y</div>
<div class="t" style="left:1123.76px;top:587.19px;font-size:11.00px;color:#b40000;transform:scaleX(0.8798);">X</div>
<div class="r" style="left:50px;top:625px;width:1148px;height:210px;background:#ffffff;"></div>
<div class="t" style="left:53.03px;top:633.30px;font-size:15.00px;color:#222;font-weight:bold;transform:scaleX(0.9898);">Isothermal flow calculation</div>
<div class="r" style="left:51px;top:656px;width:1147px;height:24px;background:#ffffff;box-sizing:border-box;border:1px solid #e3e3e3;border-right:none"></div>
<div class="t" style="left:53.99px;top:662.16px;font-size:12.80px;color:#000;transform:scaleX(0.9884);">Branches</div>
<div class="r" style="left:51px;top:680px;width:1147px;height:27px;background:#fafafa;"></div>
<div class="r" style="left:51px;top:681px;width:23px;height:23px;background:#ffd88c;box-sizing:border-box;border:1px solid #f7bb5a"></div>
<svg class="r" style="left:54px;top:686px" width="16" height="14" viewBox="0 0 16 14"><rect x="0.5" y="0.5" width="15" height="13" fill="#fff" stroke="#2a4a7a" stroke-width="1"/><path d="M1 3H15M1 5.5H15M1 8H15M1 10.5H15" stroke="#4a88d8" stroke-width="1.1"/><path d="M3.5 1V13" stroke="#e04010" stroke-width="1"/></svg>
<svg class="r" style="left:79px;top:685px" width="12" height="16" viewBox="0 0 12 16"><path d="M4 1.5H7.5V5.5L10.5 9A4.5 4.5 0 0 1 6 14.5A4.5 4.5 0 0 1 1.5 9L4 5.5Z" fill="#f0e0e0" stroke="#c8a4a4" stroke-width="1"/><path d="M2 9.5H10A4 4 0 0 1 6 13.8A4 4 0 0 1 2 9.5Z" fill="#d4aaaa"/></svg>
<svg class="r" style="left:102px;top:685px" width="12" height="16" viewBox="0 0 12 16"><path d="M4 1.5H7.5V5.5L10.5 9A4.5 4.5 0 0 1 6 14.5A4.5 4.5 0 0 1 1.5 9L4 5.5Z" fill="#f0e0e0" stroke="#c8a4a4" stroke-width="1"/><path d="M2 9.5H10A4 4 0 0 1 6 13.8A4 4 0 0 1 2 9.5Z" fill="#d4aaaa"/></svg>
<svg class="r" style="left:125px;top:685px" width="12" height="16" viewBox="0 0 12 16"><path d="M4 1.5H7.5V5.5L10.5 9A4.5 4.5 0 0 1 6 14.5A4.5 4.5 0 0 1 1.5 9L4 5.5Z" fill="#f0e0e0" stroke="#c8a4a4" stroke-width="1"/><path d="M2 9.5H10A4 4 0 0 1 6 13.8A4 4 0 0 1 2 9.5Z" fill="#d4aaaa"/></svg>
<svg class="r" style="left:148px;top:685px" width="12" height="16" viewBox="0 0 12 16"><path d="M4 1.5H7.5V5.5L10.5 9A4.5 4.5 0 0 1 6 14.5A4.5 4.5 0 0 1 1.5 9L4 5.5Z" fill="#f0e0e0" stroke="#c8a4a4" stroke-width="1"/><path d="M2 9.5H10A4 4 0 0 1 6 13.8A4 4 0 0 1 2 9.5Z" fill="#d4aaaa"/><path d="M6 4V13" stroke="#707070" stroke-width="1"/></svg>
<svg class="r" style="left:171px;top:685px" width="12" height="16" viewBox="0 0 12 16"><path d="M4 1.5H7.5V5.5L10.5 9A4.5 4.5 0 0 1 6 14.5A4.5 4.5 0 0 1 1.5 9L4 5.5Z" fill="#f0e0e0" stroke="#c8a4a4" stroke-width="1"/><path d="M2 9.5H10A4 4 0 0 1 6 13.8A4 4 0 0 1 2 9.5Z" fill="#d4aaaa"/><path d="M5 4V13M7 4V13" stroke="#707070" stroke-width="1"/></svg>
<svg class="r" style="left:194px;top:685px" width="12" height="16" viewBox="0 0 12 16"><path d="M4 1.5H7.5V5.5L10.5 9A4.5 4.5 0 0 1 6 14.5A4.5 4.5 0 0 1 1.5 9L4 5.5Z" fill="#f0e0e0" stroke="#c8a4a4" stroke-width="1"/><path d="M2 9.5H10A4 4 0 0 1 6 13.8A4 4 0 0 1 2 9.5Z" fill="#d4aaaa"/><path d="M4.5 5V13M7.5 5V13M4.5 9.5H7.5" stroke="#707070" stroke-width="1"/></svg>
<div class="r" style="left:214px;top:684px;width:1px;height:16px;background:#c8c8c8;"></div>
<svg class="r" style="left:221px;top:685px" width="16" height="15" viewBox="0 0 16 15"><path d="M3 5L6 2H10L13 5L14.5 8L13 11L10 13.5H6L3 11L1.5 8Z" fill="#f0dede" stroke="#c8a4a4" stroke-width="1"/><path d="M2.5 7H13.5M2.5 9H13.5" stroke="#907878" stroke-width="1.1"/></svg>
<div class="r" style="left:243px;top:684px;width:1px;height:16px;background:#c8c8c8;"></div>
<svg class="r" style="left:253px;top:684px" width="10" height="17" viewBox="0 0 10 17"><rect x="1" y="1.5" width="8" height="2" fill="#707070"/><path d="M2 3.5H8V14A3 3 0 0 1 2 14Z" fill="#f4eaea" stroke="#908080" stroke-width="0.9"/><path d="M2.5 9H7.5V14A2.5 2.5 0 0 1 2.5 14Z" fill="#d8a8a8"/></svg>
<div class="r" style="left:101px;top:707px;width:1px;height:23px;background:#a89494;"></div>
<div class="r" style="left:205px;top:707px;width:1px;height:23px;background:#a89494;"></div>
<div class="r" style="left:276px;top:707px;width:1px;height:23px;background:#a89494;"></div>
<div class="r" style="left:377px;top:707px;width:1px;height:23px;background:#a89494;"></div>
<div class="r" style="left:501px;top:707px;width:1px;height:23px;background:#a89494;"></div>
<div class="r" style="left:639px;top:707px;width:1px;height:23px;background:#a89494;"></div>
<div class="r" style="left:724px;top:707px;width:1px;height:23px;background:#a89494;"></div>
<div class="r" style="left:795px;top:707px;width:1px;height:23px;background:#a89494;"></div>
<div class="r" style="left:872px;top:707px;width:1px;height:23px;background:#a89494;"></div>
<div class="r" style="left:942px;top:707px;width:1px;height:23px;background:#a89494;"></div>
<div class="r" style="left:1074px;top:707px;width:1px;height:23px;background:#a89494;"></div>
<div class="r" style="left:51px;top:730px;width:1147px;height:1px;background:#a89494;"></div>
<div class="t" style="left:53.85px;top:712.32px;font-size:14.50px;color:#6a6a6a;transform:scaleX(0.9934);">Branch</div>
<div class="t" style="left:104.49px;top:712.32px;font-size:14.50px;color:#6a6a6a;transform:scaleX(1.0436);">Flow rate, kg/h</div>
<div class="t" style="left:208.12px;top:712.32px;font-size:14.50px;color:#6a6a6a;transform:scaleX(1.0205);">Length, m</div>
<div class="t" style="left:279.78px;top:712.32px;font-size:14.50px;color:#6a6a6a;transform:scaleX(1.0549);">Diameter, mm</div>
<div class="t" style="left:379.78px;top:712.32px;font-size:14.50px;color:#6a6a6a;transform:scaleX(1.0494);">Max. velocity, m/s</div>
<div class="t" style="left:503.79px;top:712.32px;font-size:14.50px;color:#6a6a6a;transform:scaleX(1.0414);">Max. density, kg/m3</div>
<div class="t" style="left:642.26px;top:712.32px;font-size:14.50px;color:#6a6a6a;transform:scaleX(0.9813);">Friction, kPa</div>
<div class="t" style="left:727.69px;top:712.32px;font-size:14.50px;color:#6a6a6a;transform:scaleX(0.9556);">Local, kPa</div>
<div class="t" style="left:798.52px;top:712.32px;font-size:14.50px;color:#6a6a6a;transform:scaleX(0.9333);">Elev., kPa</div>
<div class="t" style="left:876.71px;top:712.32px;font-size:14.50px;color:#6a6a6a;transform:scaleX(0.9832);">Total, kPa</div>
<div class="t" style="left:946.17px;top:712.32px;font-size:14.50px;color:#6a6a6a;transform:scaleX(0.9707);">Start pressure, MPa</div>
<div class="t" style="left:1077.37px;top:712.32px;font-size:14.50px;color:#6a6a6a;transform:scaleX(0.9707);">End pressure, MPa</div>
<div class="t" style="left:72.55px;top:735.92px;font-size:12.50px;color:#000;transform:scaleX(1.1152);">1-2</div>
<div class="t" style="left:107.51px;top:735.92px;font-size:12.50px;color:#000;transform:scaleX(1.0467);">-17122.52</div>
<div class="t" style="left:224.05px;top:735.92px;font-size:12.50px;color:#000;transform:scaleX(1.0149);">1000.05</div>
<div class="t" style="left:286.66px;top:735.92px;font-size:12.50px;color:#000;">100</div>
<div class="t" style="left:395.69px;top:735.92px;font-size:12.50px;color:#000;transform:scaleX(1.0194);">0.61</div>
<div class="t" style="left:511.82px;top:735.92px;font-size:12.50px;color:#000;transform:scaleX(1.0245);">998.23</div>
<div class="t" style="left:645.72px;top:735.92px;font-size:12.50px;color:#000;transform:scaleX(1.0323);">-47.92620</div>
<div class="t" style="left:805.42px;top:735.92px;font-size:12.50px;color:#000;transform:scaleX(1.0269);">97.92620</div>
<div class="t" style="left:882.69px;top:735.92px;font-size:12.50px;color:#000;transform:scaleX(1.0178);">50.00000</div>
<div class="t" style="left:956.79px;top:735.92px;font-size:12.50px;color:#000;transform:scaleX(1.0102);">0.15000</div>
<div class="t" style="left:1088.79px;top:735.92px;font-size:12.50px;color:#000;transform:scaleX(1.0192);">0.10000</div>
<div class="t" style="left:72.93px;top:756.02px;font-size:12.50px;color:#000;transform:scaleX(1.0686);">2-3</div>
<div class="t" style="left:111.87px;top:756.02px;font-size:12.50px;color:#000;transform:scaleX(1.0125);">61364.90</div>
<div class="t" style="left:227.89px;top:756.02px;font-size:12.50px;color:#000;transform:scaleX(1.0184);">500.90</div>
<div class="t" style="left:286.66px;top:756.02px;font-size:12.50px;color:#000;">100</div>
<div class="t" style="left:395.54px;top:756.02px;font-size:12.50px;color:#000;transform:scaleX(1.0623);">2.17</div>
<div class="t" style="left:511.83px;top:756.02px;font-size:12.50px;color:#000;transform:scaleX(1.0155);">998.21</div>
<div class="t" style="left:645.66px;top:756.02px;font-size:12.50px;color:#000;transform:scaleX(1.0223);">293.77187</div>
<div class="t" style="left:801.82px;top:756.02px;font-size:12.50px;color:#000;transform:scaleX(1.0344);">-293.77187</div>
<div class="t" style="left:886.69px;top:756.02px;font-size:12.50px;color:#000;transform:scaleX(1.0192);">0.00000</div>
<div class="t" style="left:956.79px;top:756.02px;font-size:12.50px;color:#000;transform:scaleX(1.0102);">0.10000</div>
<div class="t" style="left:1088.79px;top:756.02px;font-size:12.50px;color:#000;transform:scaleX(1.0192);">0.10000</div>
<svg class="r" style="left:56px;top:734px" width="14" height="16" viewBox="0 0 14 16"><path d="M2 1V8.5H7V14H12.5" fill="none" stroke="#1060b0" stroke-width="2.2"/></svg>
<svg class="r" style="left:56px;top:754px" width="14" height="16" viewBox="0 0 14 16"><path d="M2 1V8.5H7V14H12.5" fill="none" stroke="#1060b0" stroke-width="2.2"/></svg>
<div class="r" style="left:158px;top:862px;width:192px;height:31px;background:#fdfdfd;"></div>
<div class="r" style="left:158px;top:892px;width:193px;height:1px;background:#3c3c3c;"></div>
<div class="r" style="left:350px;top:862px;width:1px;height:31px;background:#3c3c3c;"></div>
<div class="r" style="left:539px;top:865px;width:1px;height:26px;background:#9c8a8a;"></div>
<div class="r" style="left:786px;top:865px;width:1px;height:26px;background:#9c8a8a;"></div>
<div class="r" style="left:902px;top:865px;width:1px;height:26px;background:#9c8a8a;"></div>
<div class="r" style="left:1061px;top:865px;width:1px;height:26px;background:#9c8a8a;"></div>
<div class="r" style="left:1187px;top:865px;width:1px;height:26px;background:#9c8a8a;"></div>
<div class="t" style="left:59.62px;top:871.30px;font-size:15.00px;color:#9c8a8a;transform:scaleX(1.0256);">Input data list</div>
<div class="t" style="left:164.52px;top:871.30px;font-size:15.00px;color:#000;transform:scaleX(1.0233);">Isothermal flow calculation</div>
<div class="t" style="left:356.75px;top:871.30px;font-size:15.00px;color:#9c8a8a;">Control/Target Parameters</div>
<div class="t" style="left:545.25px;top:871.30px;font-size:15.00px;color:#9c8a8a;">Computationally Independent Parts</div>
<div class="t" style="left:792.25px;top:871.30px;font-size:15.00px;color:#9c8a8a;">Calculation Log</div>
<div class="t" style="left:908.93px;top:871.30px;font-size:15.00px;color:#9c8a8a;transform:scaleX(0.9794);">Waterhammer Results</div>
<div class="t" style="left:1066.35px;top:871.30px;font-size:15.00px;color:#9c8a8a;transform:scaleX(0.9556);">Slug Flow Results</div>
</body></html>
